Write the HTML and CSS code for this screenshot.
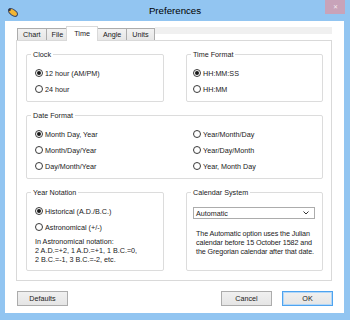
FILE: index.html
```html
<!DOCTYPE html>
<html lang="en">
<head>
  <meta charset="UTF-8">
  <title>Preferences</title>
  <link rel="stylesheet" href="styles.css">
</head>
<body>
  <div class="window">
    <div class="titlebar">
      <svg class="app-icon" width="12" height="12" viewBox="0 0 12 12">
        <ellipse cx="6" cy="6.5" rx="5" ry="2.8" transform="rotate(35 6 6.5)" fill="#f2b534" stroke="#3b4a6b" stroke-width="1"/>
        <circle cx="2.6" cy="3.8" r="1.2" fill="#2d3344"/>
      </svg>
      <div class="title">Preferences</div>
      <div class="close">✕</div>
    </div>
    <div class="client">
      <div class="tabs">
        <div class="tab">Chart</div>
        <div class="tab">File</div>
        <div class="tab active">Time</div>
        <div class="tab">Angle</div>
        <div class="tab">Units</div>
        <div class="tab-fill"></div>
      </div>
      <div class="panel">
        <div class="group clock">
          <span class="group-title">Clock</span>
          <label class="radio"><span class="dot checked"></span>12 hour (AM/PM)</label>
          <label class="radio"><span class="dot"></span>24 hour</label>
        </div>
        <div class="group time-format">
          <span class="group-title">Time Format</span>
          <label class="radio"><span class="dot checked"></span>HH:MM:SS</label>
          <label class="radio"><span class="dot"></span>HH:MM</label>
        </div>
        <div class="group date-format">
          <span class="group-title">Date Format</span>
          <label class="radio"><span class="dot checked"></span>Month Day, Year</label>
          <label class="radio"><span class="dot"></span>Month/Day/Year</label>
          <label class="radio"><span class="dot"></span>Day/Month/Year</label>
          <label class="radio"><span class="dot"></span>Year/Month/Day</label>
          <label class="radio"><span class="dot"></span>Year/Day/Month</label>
          <label class="radio"><span class="dot"></span>Year, Month Day</label>
        </div>
        <div class="group year-notation">
          <span class="group-title">Year Notation</span>
          <label class="radio"><span class="dot checked"></span>Historical (A.D./B.C.)</label>
          <label class="radio"><span class="dot"></span>Astronomical (+/-)</label>
          <p class="note">In Astronomical notation:<br>2 A.D.=+2, 1 A.D.=+1, 1 B.C.=0,<br>2 B.C.=-1, 3 B.C.=-2, etc.</p>
        </div>
        <div class="group calendar">
          <span class="group-title">Calendar System</span>
          <div class="select">
            <span>Automatic</span>
            <svg width="6" height="4" viewBox="0 0 6 4"><polyline points="0.5,0.5 3,3 5.5,0.5" fill="none" stroke="#333" stroke-width="1"/></svg>
          </div>
          <p class="note">The Automatic option uses the Julian<br>calendar before 15 October 1582 and<br>the Gregorian calendar after that date.</p>
        </div>
      </div>
      <div class="buttons">
        <button class="btn">Defaults</button>
        <button class="btn cancel">Cancel</button>
        <button class="btn default">OK</button>
      </div>
    </div>
  </div>
</body>
</html>
```
FILE: styles.css
```css
* { margin:0; padding:0; box-sizing:border-box; }
body {
  font-family: "Liberation Sans", Arial, sans-serif;
  font-size: 7.2px;
  color: #1a1a1a;
  background: #92c5f1;
  width: 350px; height: 320px;
  overflow: hidden;
}
.window {
  width: 350px; height: 320px;
  background: #92c5f1;
  display: flex; flex-direction: column;
}

/* title bar */
.titlebar {
  height: 21px;
  display: grid;
  grid-template-columns: 20px 1fr 20px;
  padding: 0 5px;
}
.app-icon { margin: 6px 0 0 2px; }
.title { text-align: center; font-size: 9.7px; line-height: 21px; color: #000; }
.close {
  height: 14px;
  background: #c8a3b9;
  color: #f3e8ee;
  font-size: 6px;
  line-height: 14px;
  text-align: center;
}

/* client area */
.client {
  margin: 0 6px 0 5px;
  height: 292px;
  background: #fff;
  padding: 5px 12px 0 11px;
}
.tabs {
  display: flex; align-items: flex-end;
  height: 14px;
  padding-left: 1px;
}
.tab {
  height: 12px; line-height: 11px;
  padding: 0 5px;
  border: 1px solid #acacac; border-bottom: none;
  margin-right: -1px;
  background: linear-gradient(#f2f2f2, #e6e6e6);
}
.tab.active {
  height: 15px; line-height: 13px;
  margin: 0 -1px -1px -2px;
  padding: 0 7px;
  background: #fff;
  border-color: #d9d9d9;
  position: relative; z-index: 1;
}
.tab-fill {
  flex: 1; align-self: flex-start;
  height: 7px; margin: 1px 0 0 1px;
  background: #f0f0f0;
}
.panel {
  height: 241px;
  border: 1px solid #d9d9d9;
  padding: 13px 8px 9px 9px;
  display: grid;
  grid-template-columns: 138px 137px;
  grid-template-rows: 48px 64px 79px;
  column-gap: 22px; row-gap: 13px;
}

/* group boxes */
.group {
  border: 1px solid #dcdcdc;
  border-radius: 2px;
  position: relative;
  padding: 10px 0 0 8px;
}
.group-title {
  position: absolute; top: -5px; left: 4px;
  padding: 0 2px;
  background: #fff;
  line-height: 9px;
}
.time-format { padding-left: 6px; }
.date-format {
  grid-column: 1 / 3;
  display: grid;
  grid-template-columns: 158px 1fr;
  grid-template-rows: repeat(3, 16px);
  grid-auto-flow: column;
}
.radio { display: flex; align-items: center; height: 16px; gap: 2px; }
.dot {
  width: 8px; height: 8px;
  border: 1px solid #3a3a3a; border-radius: 50%;
  background: #fff;
  display: flex; align-items: center; justify-content: center;
}
.dot.checked::after {
  content: ''; width: 4px; height: 4px;
  border-radius: 50%; background: #1a1a1a;
}
.note { line-height: 9px; white-space: nowrap; }
.year-notation .note { margin-top: 2px; }
.calendar { padding: 14px 7px 0 6px; }
.select {
  height: 12px;
  border: 1px solid #acacac;
  display: flex; align-items: center; justify-content: space-between;
  padding: 0 5px 0 2px;
}
.calendar .note { margin-top: 10px; padding-left: 3px; letter-spacing: -0.1px; }

/* buttons */
.buttons { display: flex; margin-top: 10px; padding-left: 1px; }
.btn {
  width: 51px; height: 15px;
  border: 1px solid #acacac;
  background: linear-gradient(#f0f0f0, #e5e5e5);
  font: inherit; color: #1a1a1a;
}
.cancel { margin-left: auto; }
.default {
  margin: 0 -1px 0 10px;
  border-color: #4ea3ef;
  box-shadow: inset 0 0 0 1px #b3d7f7;
}
```
